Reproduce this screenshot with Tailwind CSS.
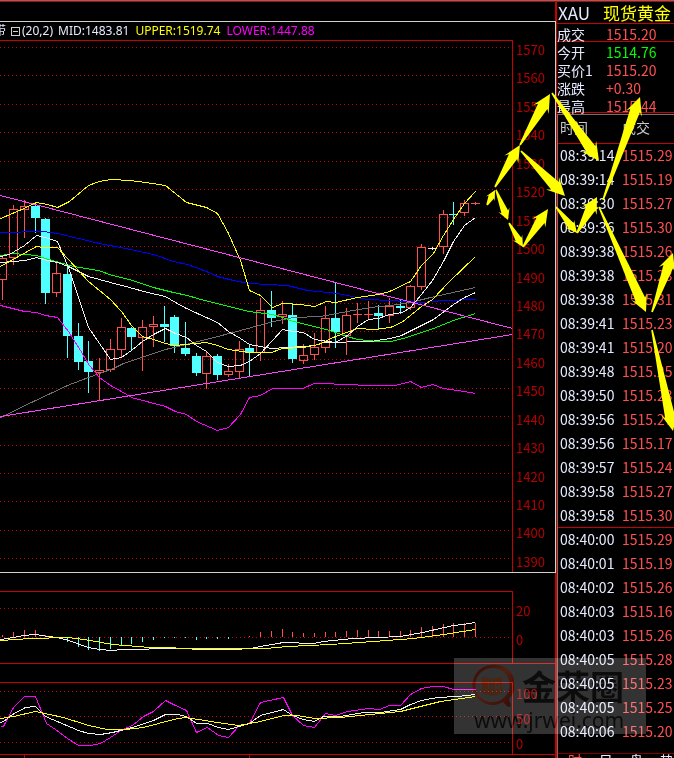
<!DOCTYPE html>
<html lang="zh-CN">
<head>
    <meta charset="UTF-8">
    <meta name="viewport" content="width=device-width, initial-scale=1.0">
    <title>XAU 现货黄金</title>
    <script src="https://cdn.jsdelivr.net/npm/@tailwindcss/browser@4"></script>
</head>
<body class="bg-black font-['Noto_Sans_CJK_SC',sans-serif] text-[#e6ebff]">
<div class="relative flex h-screen flex-col overflow-hidden bg-black">
    <div class="h-0.5 shrink-0 border-t border-b border-t-[#707070] border-b-[#c80000]"></div>

    <main class="flex min-h-0 flex-1">
        <!-- Графики -->
        <div class="flex min-w-0 flex-1 flex-col">
            <div class="h-[19px] shrink-0 border-r border-[#c80000]"></div>

            <section class="shrink-0 border-t border-r border-b border-[#d0d0d0]">
                <header class="flex h-[18px] items-center overflow-hidden font-['Noto_Sans','Noto_Sans_CJK_SC',sans-serif] text-xs leading-4 whitespace-nowrap">
                    <span class="-ml-1.5">带</span>
                    <button type="button" aria-label="收起" class="ml-[5px]">
                        <svg class="block h-[9px] w-[9px]" viewBox="0 0 9 9" fill="none" stroke="#d0d0d0" shape-rendering="crispEdges">
                            <path d="M.5 .5h8v8h-8zM2 4.5h5"/>
                        </svg>
                    </button>
                    <span class="ml-0.5">(20,2)</span>
                    <span class="ml-[5px]">MID:1483.81</span>
                    <span class="ml-1.5 text-[#ffff00]">UPPER:1519.74</span>
                    <span class="ml-1.5 text-[#ff00ff]">LOWER:1447.88</span>
                </header>
                <div class="flex h-[532px]">
                    <svg class="h-full min-w-0 flex-1 border-t border-r border-[#c80000]" viewBox="0 41 512 531" preserveAspectRatio="none" fill="none" shape-rendering="crispEdges">
                        <g id="priceGrid" stroke="#c80000" stroke-dasharray="1 3"></g>
                        <g id="candles"></g>
                        <g transform="translate(.5 .5)">
                            <polyline stroke="#707070" points="0,417 33,401 67,385 88,377 113,368 123,363 165,349 206,339 240,330 273,321 293,317 320,316 347,311 370,307 390,305 410,302 430,297 475,287"/>
                            <polyline stroke="#0000ff" points="0,232 43,231 57,233 99,243 130,249 153,254 173,261 187,264 206,271 217,276 233,280 249,283 287,285 307,290 337,293 367,299 390,300 421,302 443,300 475,299"/>
                            <polyline stroke="#00ff00" points="0,255 13,253 36,255 45,258 73,266 98,270 112,275 129,279 153,287 173,292 187,295 197,298 228,306 249,311 272,314 282,317 293,321 326,329 347,336 357,339 378,341 390,341 403,338 421,332 433,328 453,320 475,313"/>
                            <polyline stroke="#f0f0f0" points="0,262 25,260 36,257 43,259 57,262 68,266 88,276 110,282 129,287 147,292 165,296 175,302 186,308 208,318 217,322 228,331 240,338 249,344 260,346 271,348 303,346 314,345 323,342 370,341 390,338 401,335 421,325 433,319 453,304 464,297 475,292"/>
                            <polyline stroke="#f0f0f0" points="0,256 9,254 24,245 36,235 45,237 57,241 68,267 78,297 88,327 99,343 110,359 121,357 131,350 142,341 153,334 165,328 175,333 186,337 196,345 206,351 217,362 228,366 240,365 249,361 260,353 272,340 282,329 293,331 303,332 314,339 335,342 347,335 357,326 368,319 378,318 389,314 402,312 410,307 421,294 432,280 443,261 453,241 464,225 475,217"/>
                            <polyline stroke="#ffff00" points="0,266 18,256 36,246 43,247 57,247 68,259 88,281 110,299 121,311 131,325 142,336 153,339 165,343 175,345 195,343 206,342 217,345 228,349 249,352 271,352 282,348 303,347 318,344 335,336 357,328 373,329 390,327 401,322 410,315 421,306 432,299 448,282 475,256"/>
                            <polyline stroke="#ffff00" points="0,218 19,210 36,202 47,204 57,207 69,201 88,185 99,181 110,179 130,180 145,182 165,185 186,202 206,207 217,213 228,233 240,260 249,290 260,295 272,307 282,303 300,304 314,306 326,301 335,302 357,297 378,294 389,291 410,281 421,265 433,253 443,235 453,219 464,203 475,191"/>
                            <polyline stroke="#ff00ff" points="0,305 24,311 36,312 45,315 57,317 68,331 80,350 89,365 99,377 110,385 121,391 131,397 165,406 175,411 186,414 196,421 217,430 228,427 240,414 249,397 260,395 272,388 302,388 314,383 352,384 363,385 395,385 410,381 421,387 432,384 443,388 464,391 475,393"/>
                            <path stroke="#ff40ff" d="M0 195L512 328M0 416L512 334"/>
                        </g>
                    </svg>
                    <div id="priceAxis" class="flex w-[42px] shrink-0 flex-col justify-between pt-0.5 pb-0.5 pl-[3px] text-[13px] leading-4 text-[#b40000]"></div>
                </div>
            </section>

            <div class="h-[18px] shrink-0 border-r border-[#c80000]"></div>

            <!-- MACD -->
            <section class="flex h-[73px] shrink-0 border-r border-b border-[#c80000]">
                <svg class="h-full min-w-0 flex-1 border-t border-r border-[#c80000]" viewBox="0 592 512 71" preserveAspectRatio="none" fill="none" shape-rendering="crispEdges">
                    <path stroke="#c80000" stroke-dasharray="1 3" d="M0 608.5H512M0 637.5H512"/>
                    <g id="macdBars"></g>
                    <g transform="translate(.5 .5)">
                        <polyline stroke="#f0f0f0" points="0,639 13,637 23,635 35,634 47,636 57,637 68,640 88,647 99,649 112,650 122,649 147,649 150,648 190,648 193,649 233,649 250,648 260,646 283,642 313,643 323,641 353,638 400,636 422,632 453,625 463,624 475,622"/>
                        <polyline stroke="#ffff00" points="0,640 30,638 68,637 90,640 112,644 150,647 200,648 265,648 287,646 330,644 373,641 413,638 443,634 475,629"/>
                    </g>
                </svg>
                <div class="flex w-[42px] shrink-0 flex-col gap-[13px] pt-3 pl-[3px] text-[13px] leading-4 text-[#b40000]">
                    <span>20</span>
                    <span>0</span>
                </div>
            </section>

            <div class="h-[18px] shrink-0 border-r border-[#c80000]"></div>

            <!-- KDJ -->
            <section class="flex h-[73px] shrink-0 border-r border-b border-[#c80000]">
                <svg class="h-full min-w-0 flex-1 border-t border-r border-[#c80000]" viewBox="0 683 512 71" preserveAspectRatio="none" fill="none" shape-rendering="crispEdges">
                    <path stroke="#c80000" stroke-dasharray="1 3" d="M0 691.5H512M0 716.5H512M0 742.5H512"/>
                    <g transform="translate(.5 .5)">
                        <polyline stroke="#ff00ff" points="0,726 3,726 13,707 24,696 35,696 46,723 55,729 67,738 78,745 90,745 100,743 110,737 122,729 132,725 143,716 153,711 165,700 175,705 186,710 196,732 207,727 218,735 228,737 239,725 249,723 260,702 283,697 292,715 303,725 314,727 325,713 335,715 347,711 368,708 379,709 389,705 400,705 410,694 421,688 433,686 443,686 453,689 475,689"/>
                        <polyline stroke="#f0f0f0" points="0,722 3,721 12,714 25,707 35,706 45,716 78,730 88,733 100,734 112,732 132,727 153,720 165,714 177,714 186,716 196,723 207,723 218,727 228,729 249,723 260,715 283,709 292,715 303,719 314,721 323,716 340,716 363,712 380,712 400,709 410,704 421,700 437,697 457,696 475,694"/>
                        <polyline stroke="#ffff00" points="0,718 13,716 35,711 63,717 88,725 107,729 125,729 143,727 173,719 185,717 217,722 238,725 260,721 283,715 297,715 314,718 340,717 400,711 440,701 475,696"/>
                    </g>
                </svg>
                <div class="flex w-[42px] shrink-0 flex-col gap-[9px] pt-1 pl-[3px] text-[13px] leading-4 text-[#b40000]">
                    <span>100</span>
                    <span>50</span>
                    <span>0</span>
                </div>
            </section>

            <svg class="min-h-0 w-full flex-1 border-r border-[#c80000]" viewBox="0 0 555 3" preserveAspectRatio="none" fill="none" stroke="#c80000" shape-rendering="crispEdges">
                <path d="M24.5 0V3M249.5 0V3"/>
            </svg>
        </div>

        <!-- Котировки -->
        <aside class="w-[118px] shrink-0 overflow-hidden border-l border-[#c80000] text-sm whitespace-nowrap">
            <h1 class="flex h-[22px] items-center border-b border-[#c80000] pl-px text-[17px] leading-[22px]">
                <span class="w-[45px]">XAU</span>
                <span class="text-[#ffff00]">现货黄金</span>
            </h1>
            <dl class="grid h-[18px] grid-cols-[49px_1fr] border-b border-[#c80000] leading-5">
                <dt>成交</dt>
                <dd class="text-[#ff5050]">1515.20</dd>
            </dl>
            <dl class="grid h-[71px] auto-rows-[18px] grid-cols-[49px_1fr] border-b border-[#c80000] leading-5">
                <dt>今开</dt>
                <dd class="text-[#00ff00]">1514.76</dd>
                <dt>买价1</dt>
                <dd class="text-[#ff5050]">1515.20</dd>
                <dt>涨跌</dt>
                <dd class="text-[#ff5050]">+0.30</dd>
                <dt>最高</dt>
                <dd class="text-[#ff5050]">1515.44</dd>
            </dl>
            <div class="mt-px border-t border-l border-[#707070]">
                <table class="w-full table-fixed border-collapse text-left">
                    <thead>
                        <tr class="h-7 border-b border-[#c80000] align-top leading-6 text-[#c8c8c8]">
                            <th class="w-[62px] p-0 pl-0.5 font-normal">时间</th>
                            <th class="p-0 pl-0.5 font-normal">成交</th>
                        </tr>
                    </thead>
                    <tbody id="ticks"></tbody>
                </table>
                <div class="mt-[10px] flex h-5 items-start border-t border-[#800000] pl-2.5 leading-3">
                    <button type="button" class="w-8 text-left text-[#ff5050]">时</button>
                    <button type="button" class="w-8 text-left">日</button>
                    <button type="button" class="w-8 text-left">盘</button>
                    <button type="button" class="text-left">势</button>
                </div>
            </div>
        </aside>
    </main>

    <!-- Водяной знак -->
    <div class="absolute top-[658px] right-7 h-[76px] w-48 bg-[#333333] text-[#0c0c0c] mix-blend-screen">
        <div class="flex h-[50px] items-center pt-1.5 pl-4">
            <svg class="h-[44px] w-[44px] shrink-0" viewBox="0 0 44 44" fill="none">
                <defs>
                    <linearGradient id="ring" x1="0" y1="0" x2="1" y2="1">
                        <stop offset="0" stop-color="#380805"/>
                        <stop offset=".45" stop-color="#502010"/>
                        <stop offset="1" stop-color="#380a06"/>
                    </linearGradient>
                </defs>
                <path fill="url(#ring)" fill-rule="evenodd" d="M22 1a20 20 0 1 0 11 37l5 5 3-1-2-7A20 20 0 0 0 22 1zM24 4a17 17 0 1 1-3 34A17 17 0 0 1 24 4z"/>
                <path fill="#4c2410" d="M12 13l10 2 10-2v16l-10 3-10-3z"/>
                <path stroke="#303030" stroke-width="1.5" d="M22 15v16"/>
                <text x="14" y="27" font-size="11" font-weight="700" fill="#333333">J</text>
                <text x="24" y="27" font-size="11" font-weight="700" fill="#333333">R</text>
            </svg>
            <span class="ml-2 text-[34px] leading-10 font-bold">金荣圈</span>
        </div>
        <p class="pl-5 font-['Noto_Sans',sans-serif] text-[21px] leading-6">www.jrwei.com</p>
    </div>

    <!-- Стрелки прогноза -->
    <svg id="arrows" class="pointer-events-none absolute top-0 right-0 h-[758px] w-[674px]" viewBox="0 0 674 758" fill="#ffff00"></svg>
</div>

<script>
    // x, цвет, максимум, верх тела, низ тела, минимум
    const candles = [
        [2, 'r', 255, 258, 279, 299], [13, 'r', 205, 209, 257, 264], [24, 'r', 200, 206, 209, 237],
        [35, 'c', 204, 206, 218, 233], [45, 'c', 218, 219, 293, 304], [56, 'r', 263, 273, 292, 296],
        [67, 'c', 265, 274, 336, 358], [78, 'c', 323, 336, 362, 370], [88, 'c', 341, 361, 372, 393],
        [99, 'r', 358, 370, 372, 400], [110, 'r', 339, 349, 369, 371], [121, 'r', 318, 327, 349, 356],
        [131, 'c', 327, 328, 337, 351], [142, 'r', 320, 327, 337, 370], [153, 'r', 316, 324, 326, 346],
        [164, 'c', 306, 324, 327, 342], [174, 'c', 315, 317, 346, 353], [185, 'c', 322, 348, 354, 356],
        [196, 'c', 353, 356, 373, 376], [206, 'r', 351, 356, 373, 388], [217, 'c', 354, 356, 375, 380],
        [228, 'r', 364, 371, 374, 376], [239, 'r', 341, 349, 371, 377], [249, 'c', 344, 348, 353, 376],
        [260, 'r', 298, 310, 352, 360], [271, 'c', 291, 310, 318, 327], [282, 'r', 301, 314, 316, 323],
        [292, 'c', 303, 315, 359, 363], [303, 'r', 344, 355, 360, 363], [314, 'r', 333, 347, 354, 359],
        [325, 'r', 306, 318, 347, 352], [335, 'c', 282, 318, 332, 348], [346, 'r', 308, 315, 335, 354],
        [357, 'r', 303, 314, 314, 322], [368, 'r', 301, 314, 314, 319], [378, 'c', 305, 313, 316, 330],
        [389, 'r', 298, 306, 315, 322], [400, 'c', 300, 306, 308, 314], [410, 'r', 285, 286, 307, 309],
        [421, 'r', 244, 247, 286, 289], [432, 'w', 247, 248, 248, 249], [443, 'r', 210, 214, 246, 253],
        [453, 'c', 202, 214, 215, 225], [464, 'r', 200, 203, 212, 215], [475, 'r', 202, 203, 203, 204]
    ];
    const colors = { r: '#ff5050', c: '#50ffff', w: '#f0f0f0' };

    document.getElementById('candles').innerHTML = candles.map(([x, type, high, top, bottom, low]) => {
        const color = colors[type];
        if (type === 'c') {
            return `<path stroke="${color}" d="M${x + .5} ${high}V${low}"/>
                <rect fill="${color}" x="${x - 4}" y="${top}" width="9" height="${bottom - top}"/>`;
        }
        const body = top === bottom
            ? `M${x - 4} ${top + .5}h9`
            : `M${x - 3.5} ${top + .5}h8V${bottom + .5}h-8z`;
        return `<path stroke="${color}" d="M${x + .5} ${high}V${top}M${x + .5} ${bottom}V${low + 1}${body}"/>`;
    }).join('');

    // Сетка и шкала цены
    let grid = '';
    let axis = '';
    for (let i = 0; i < 19; i++) {
        const y = Math.round(47 + i * 28.4) + .5;
        grid += `<path d="M0 ${y}H512"/>`;
        axis += `<span>${1570 - i * 10}</span>`;
    }
    document.getElementById('priceGrid').innerHTML = grid;
    document.getElementById('priceAxis').innerHTML = axis;

    // Гистограмма MACD относительно нуля (y = 637)
    const macd = [-2, -5, -7, -7, -2, 0, 5, 10, 13, 14, 12, 8, 7, 5, 3, 1, 1, 1, 3, 2, 2, 2, 0, -1,
        -5, -6, -8, -5, -4, -4, -5, -5, -6, -7, -7, -6, -6, -6, -7, -10, -11, -13, -14, -14, -14];
    document.getElementById('macdBars').innerHTML = macd.map((v, i) =>
        `<path stroke="${v < 0 ? colors.r : colors.c}" d="M${candles[i][0] + .5} 637v${v}"/>`
    ).join('');

    // Лента сделок
    const ticks = [
        ['08:39:14', '1515.29'], ['08:39:14', '1515.19'], ['08:39:30', '1515.27'], ['08:39:36', '1515.30'],
        ['08:39:38', '1515.26'], ['08:39:38', '1515.23'], ['08:39:38', '1515.31'], ['08:39:41', '1515.23'],
        ['08:39:41', '1515.20'], ['08:39:48', '1515.25'], ['08:39:50', '1515.23'], ['08:39:56', '1515.27'],
        ['08:39:56', '1515.17'], ['08:39:57', '1515.24'], ['08:39:58', '1515.27'], ['08:39:58', '1515.30'],
        ['08:40:00', '1515.29'], ['08:40:01', '1515.19'], ['08:40:02', '1515.26'], ['08:40:03', '1515.16'],
        ['08:40:03', '1515.26'], ['08:40:05', '1515.28'], ['08:40:05', '1515.23'], ['08:40:05', '1515.25'],
        ['08:40:06', '1515.20']
    ];
    document.getElementById('ticks').innerHTML = ticks.map(([time, price], i) => `
        <tr class="h-6 leading-5 ${i === 16 ? 'border-t border-[#c80000]' : ''}">
            <td class="p-0 pl-0.5">${time}</td>
            <td class="p-0 pl-0.5 text-[#ff5050]">${price}</td>
        </tr>`).join('');

    // Хвост, остриё, длина и ширина наконечника
    const arrows = [
        [487, 205, 495, 190, 10, 10], [496, 190, 508, 220, 11, 12], [509, 223, 523, 247, 11, 11],
        [523, 247, 548, 209, 17, 16], [495, 187, 520, 145, 17, 16], [520, 145, 550, 94, 18, 18],
        [521, 151, 565, 196, 18, 18], [552, 93, 599, 161, 18, 18], [556, 207, 577, 233, 12, 12],
        [577, 233, 597, 197, 16, 17], [603, 200, 640, 97, 18, 17], [599, 207, 646, 312, 17, 17],
        [652, 312, 673, 253, 18, 17], [652, 330, 673, 431, 18, 17]
    ];
    document.getElementById('arrows').innerHTML = arrows.map(([x1, y1, x2, y2, len, width]) => {
        const d = Math.hypot(x2 - x1, y2 - y1);
        const ux = (x2 - x1) / d;
        const uy = (y2 - y1) / d;
        const at = (back, side) => `${(x2 - ux * back - uy * side).toFixed(1)},${(y2 - uy * back + ux * side).toFixed(1)}`;
        const neck = len * .8;
        return `<polygon points="${at(d, -.8)} ${at(neck, -width * .3)} ${at(len, -width / 2)} ${at(0, 0)} ${at(len, width / 2)} ${at(neck, width * .3)} ${at(d, .8)}"/>`;
    }).join('');
</script>
</body>
</html>
